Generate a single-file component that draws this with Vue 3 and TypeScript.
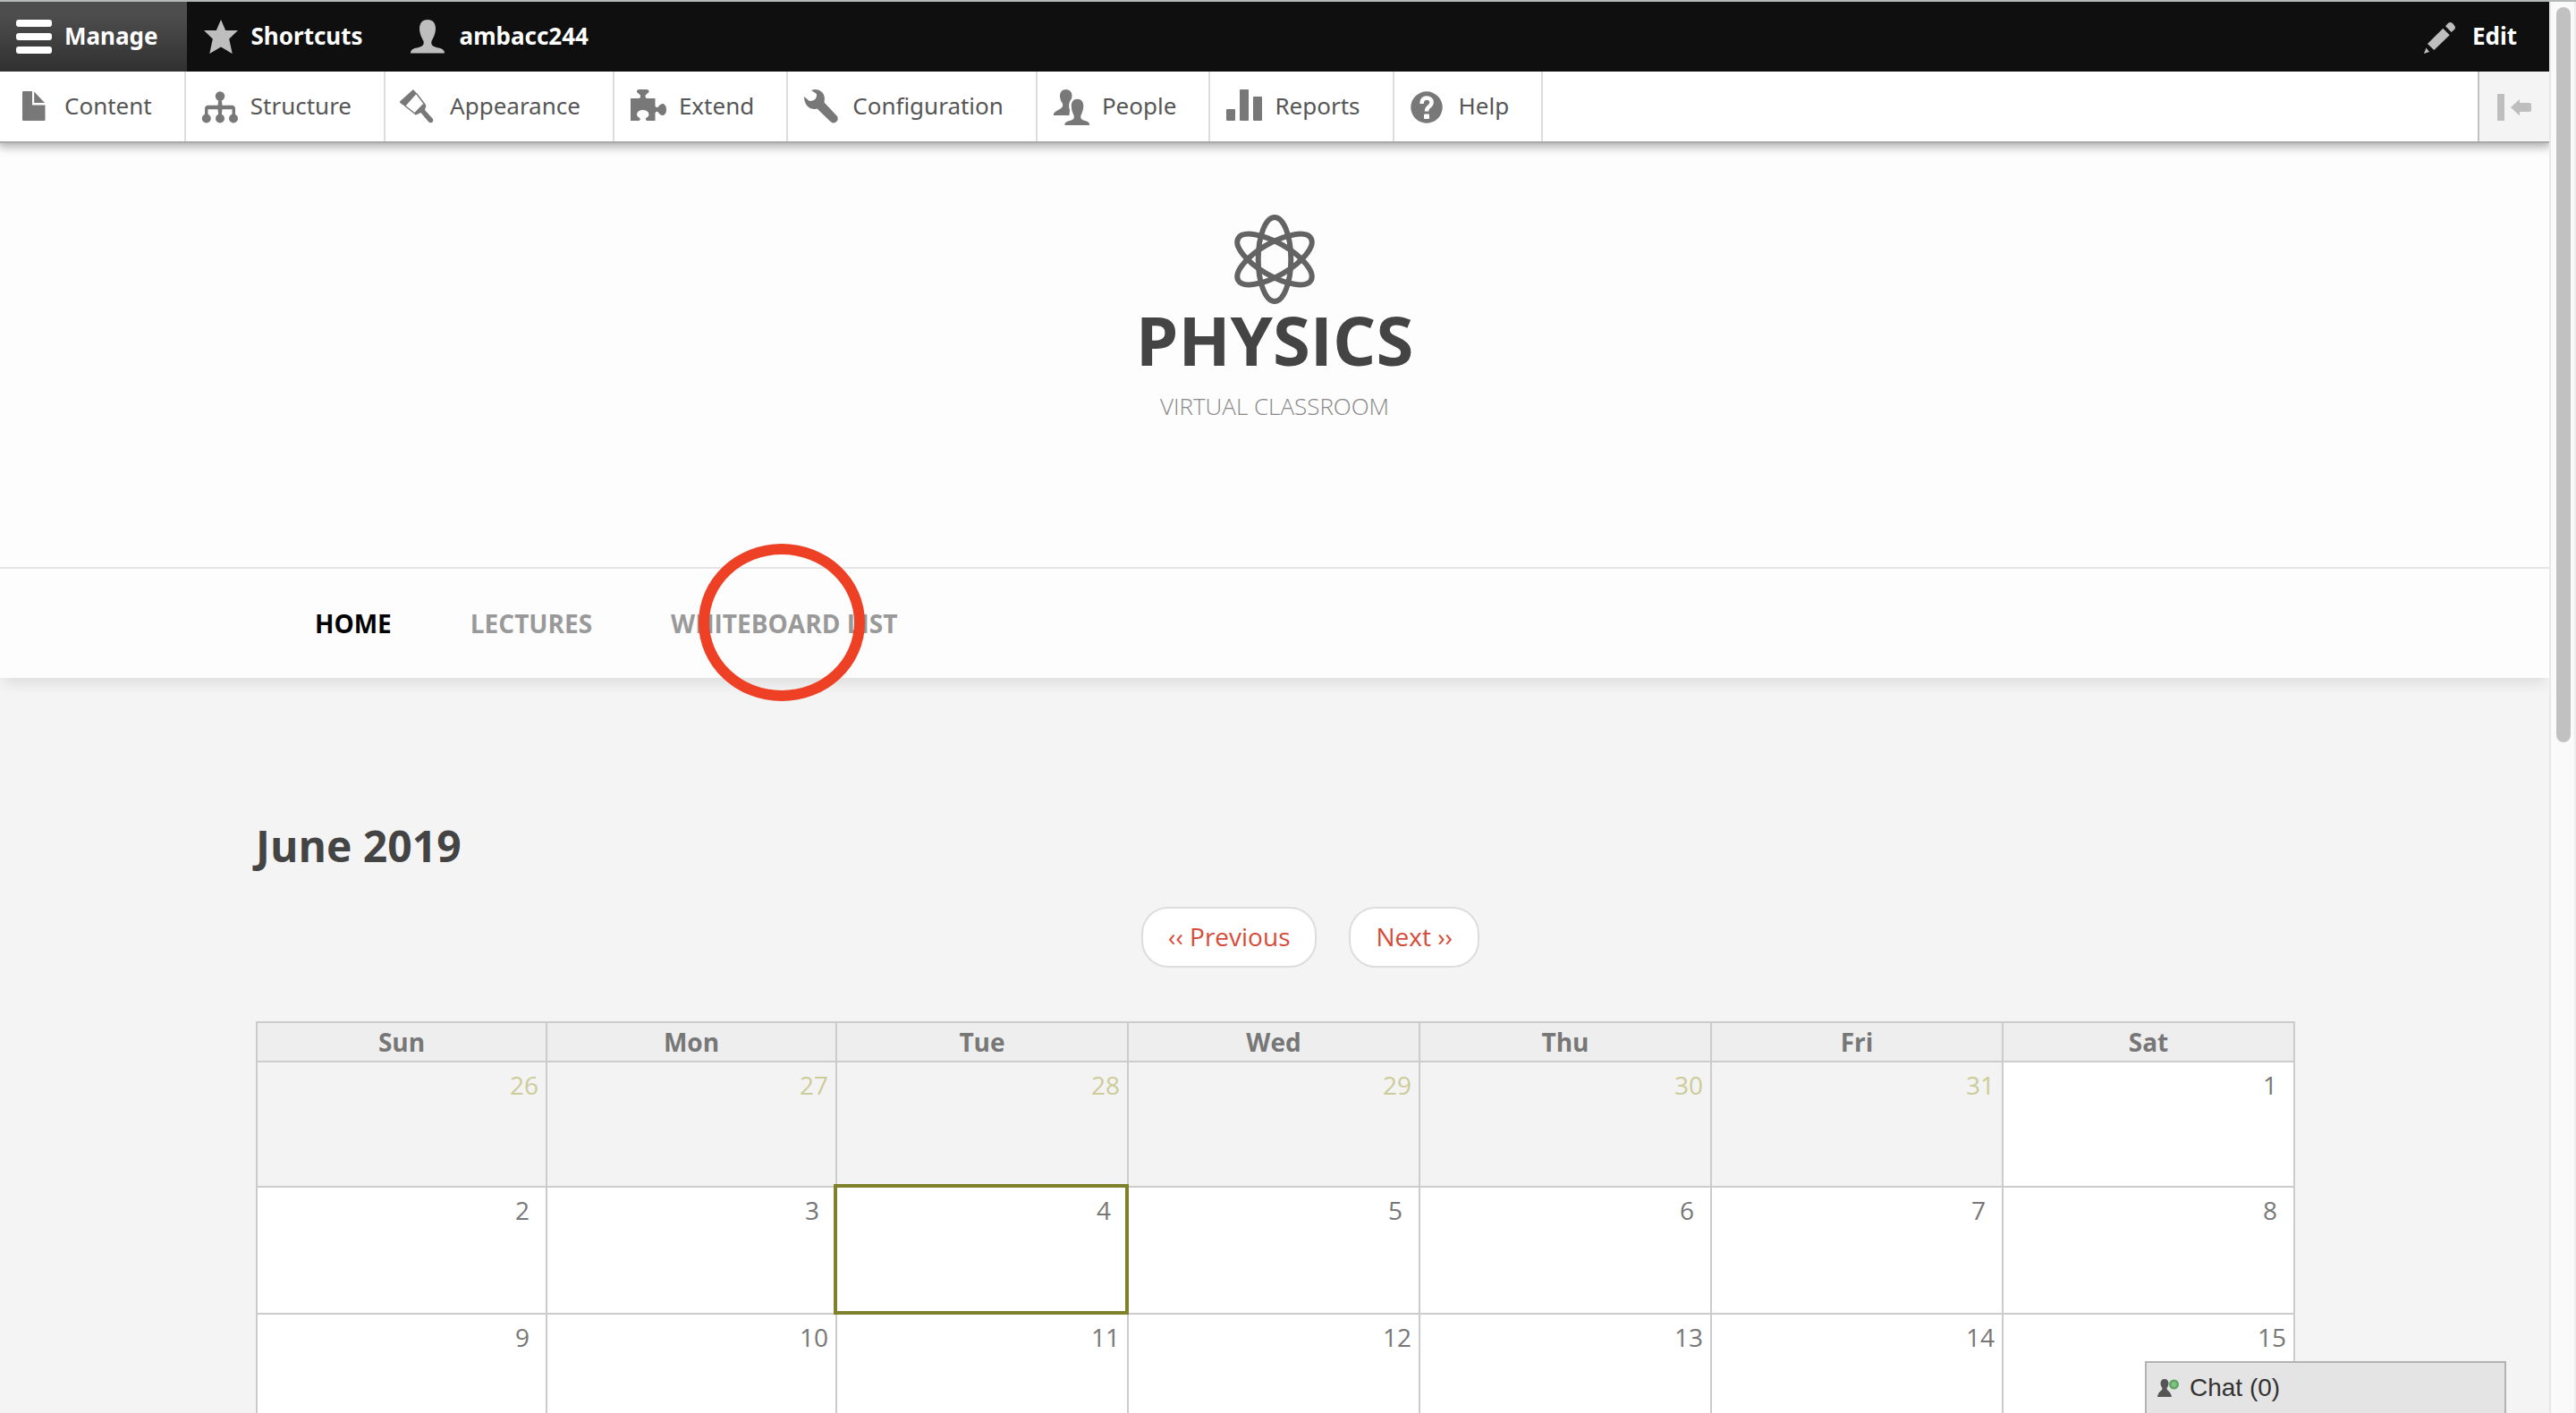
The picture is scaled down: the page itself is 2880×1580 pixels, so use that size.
<script setup lang="ts">
interface TrayItem {
  id: string
  label: string
}

interface Day {
  n: number
  other?: boolean
  today?: boolean
}

const tray: TrayItem[] = [
  { id: 'content', label: 'Content' },
  { id: 'structure', label: 'Structure' },
  { id: 'appearance', label: 'Appearance' },
  { id: 'extend', label: 'Extend' },
  { id: 'configuration', label: 'Configuration' },
  { id: 'people', label: 'People' },
  { id: 'reports', label: 'Reports' },
  { id: 'help', label: 'Help' },
]

const weekdays: string[] = ['Sun', 'Mon', 'Tue', 'Wed', 'Thu', 'Fri', 'Sat']

const range = (from: number, to: number): Day[] =>
  Array.from({ length: to - from + 1 }, (_, i) => ({ n: from + i }))

const weeks: Day[][] = [
  [...range(26, 31).map((d) => ({ ...d, other: true })), { n: 1 }],
  range(2, 8).map((d) => ({ ...d, today: d.n === 4 })),
  range(9, 15),
]
</script>

<template>
  <div class="window">
    <div class="page">
      <header class="toolbar">
        <nav class="bar" aria-label="Administration toolbar">
          <a href="#" class="tab active">
            <svg class="icon" viewBox="0 0 40 40" fill="#fff" aria-hidden="true">
              <rect x="-2" y="1" width="40" height="8" rx="3" />
              <rect x="-2" y="16" width="40" height="8" rx="3" />
              <rect x="-2" y="31" width="40" height="8" rx="3" />
            </svg>
            <span>Manage</span>
          </a>
          <a href="#" class="tab">
            <svg class="icon" viewBox="0 0 40 40" fill="#bebebe" aria-hidden="true">
              <path d="M18 1 23.2 13H37L27.2 22.5 30.7 39 18 31.5 5.3 39 8.8 22.5-1 13H12.8Z" />
            </svg>
            <span>Shortcuts</span>
          </a>
          <a href="#" class="tab">
            <svg class="icon" viewBox="0 0 40 40" fill="#bebebe" aria-hidden="true">
              <path d="M16 1C22 1 25 5 25 11 25 17 22 22 20.500 25 19.500 29 22 31 26 32 31 33 35 34 35 38.500H-3C-3 34 1 33 6 32 10 31 12.500 29 11.500 25 10 22 7 17 7 11 7 5 10 1 16 1Z" />
            </svg>
            <span>ambacc244</span>
          </a>
          <button type="button" class="tab edit">
            <svg class="icon" viewBox="0 0 40 40" fill="#bebebe" aria-hidden="true">
              <path d="M-2 39 .5 32.500 4 37Z" />
              <path d="M2 28 19.300 10.700 26.700 18.300 9.300 35Z" />
              <path d="M22 8.300 25 5Q27 3 30 5L32 7.500Q34 10 32 12L28.700 15Z" />
            </svg>
            <span>Edit</span>
          </button>
        </nav>
        <nav class="tray" aria-label="Administration menu">
          <a v-for="item in tray" :key="item.id" href="#" class="item">
            <svg class="icon" viewBox="0 0 40 40" fill="#787878" aria-hidden="true">
              <template v-if="item.id === 'content'">
                <path d="M6 3H16V18.500H30.500V35Q30.500 36 29.500 36H6Q5 36 5 35V4Q5 3 6 3Z" />
                <path d="M18.200 3.500 30 16H18.200Z" />
              </template>
              <template v-else-if="item.id === 'structure'">
                <circle cx="18" cy="8.500" r="5.200" />
                <path d="M16.300 12H19.700L20.500 18.700H31Q35 18.700 35 22.500V29H31.500V23.300H20.500L19.700 30H16.300L15.500 23.300H4.500V29H1V22.500Q1 18.700 5 18.700H15.500Z" />
                <circle cx="2.800" cy="33.500" r="5" />
                <circle cx="18" cy="33.500" r="5" />
                <circle cx="33" cy="33.500" r="5" />
              </template>
              <template v-else-if="item.id === 'appearance'">
                <path d="M11 1 15 5.500 2 20-3.800 16Q-4.500 15-3.500 14Z" />
                <path d="M14.500 5.500 24 18 13.500 28.500 2 19.500" fill="none" stroke="#787878" stroke-width="1.500" />
                <path d="M22 17 25.500 19 24 24 33 34Q34 37.500 31 38.300 28.500 38.500 27.500 36.500L19.500 27 14 29.500 12 27.500Z" />
              </template>
              <template v-else-if="item.id === 'extend'">
                <path d="M-2 11H7.500Q9.500 10 9 7.500L5 4Q4.500 1 8 1H15.500Q19 1 18.500 4L14.500 7.500Q14 10 16 11H25.500V20Q28.500 22.500 29.500 19.500 32 16.500 34.500 17 38 18.500 38 23.500 38 28.500 34.500 30 32 30.500 29.500 27.500 28.500 24.500 25.500 27V36H16Q14.500 34.500 15 33 18.500 31.500 18.500 28.500 17.500 24 11.800 24 6 24 5 28.500 5 31.500 8.500 33 9.500 34.500 7.500 36H-2Z" />
              </template>
              <template v-else-if="item.id === 'configuration'">
                <path d="M6 2Q13-1 18 4 22 8 20.500 15.500L35 31Q37 35 33.500 37.500 30 39.500 27.500 37L12.500 22.500Q6 24.500 2 20-2 16-2 9L4 14Q8 14 10.500 12 12.500 9 12 6Z" />
              </template>
              <template v-else-if="item.id === 'people'">
                <path d="M11.500 1C16 1 18.500 4 18.500 8L18 11.500C15 15 14.500 19 16 24L15.500 30H-2C-2.500 27 0 25.500 4 23.500 8 21.500 9 19 7.500 16 3.500 10 4 1 11.500 1Z" />
                <path d="M24.500 11.700C29 11.700 31.300 15 31.300 19.500 31.300 24 29.500 27.500 28.500 30 27.500 33.500 29.500 35 33 36 36 36.800 38 37.500 38 41H10.400C10.400 37.500 13 36.800 16 36 20 35 21.500 33.500 20.500 30 19.500 27.500 17.800 24 17.800 19.500 17.800 15 20 11.700 24.500 11.700Z" />
              </template>
              <template v-else-if="item.id === 'reports'">
                <rect x="-2" y="23" width="10" height="13" rx="1" />
                <rect x="13" y="1" width="10" height="35" rx="1" />
                <rect x="28" y="9" width="10" height="27" rx="1" />
              </template>
              <template v-else>
                <circle cx="16" cy="21" r="17.700" />
                <path d="M10.500 17Q10.500 10.500 16.500 10.500 21.500 11 21.500 15.500 21.500 18 19 20 16 22 16 25.500" fill="none" stroke="#fff" stroke-width="4.500" />
                <rect x="13" y="28.500" width="6" height="5.500" rx="1" fill="#fff" />
              </template>
            </svg>
            <span>{{ item.label }}</span>
          </a>
          <button type="button" class="toggle" aria-label="Vertical orientation">
            <svg class="icon" viewBox="0 0 40 40" fill="#bebebe" aria-hidden="true">
              <rect x="1" y="6" width="8" height="30" />
              <path d="M16 21 26 12V16H37Q39 16 39 18V24Q39 26 37 26H26V30.500Z" />
            </svg>
          </button>
        </nav>
      </header>

      <div class="branding">
        <svg class="atom" viewBox="0 0 100 100" fill="none" stroke="#636363" stroke-width="6" aria-hidden="true">
          <ellipse cx="50" cy="50" rx="18.300" ry="47" />
          <ellipse cx="50" cy="50" rx="18.300" ry="47" transform="rotate(60 50 50)" />
          <ellipse cx="50" cy="50" rx="18.300" ry="47" transform="rotate(-60 50 50)" />
        </svg>
        <h1>PHYSICS</h1>
        <p>VIRTUAL CLASSROOM</p>
      </div>

      <nav class="menu" aria-label="Main menu">
        <a href="#" class="current">HOME</a>
        <a href="#">LECTURES</a>
        <a href="#" class="marked">
          WHITEBOARD LIST
          <span class="ring"></span>
        </a>
      </nav>

      <main>
        <h2>June 2019</h2>
        <div class="pager">
          <a href="#">‹‹ Previous</a>
          <a href="#">Next ››</a>
        </div>
        <table>
          <thead>
            <tr>
              <th v-for="d in weekdays" :key="d" scope="col">{{ d }}</th>
            </tr>
          </thead>
          <tbody>
            <tr v-for="(week, i) in weeks" :key="i">
              <td
                v-for="day in week"
                :key="day.n"
                :class="{ other: day.other, today: day.today, single: day.n < 10 }"
              >{{ day.n }}</td>
            </tr>
          </tbody>
        </table>
      </main>

      <button type="button" class="chat">
        <svg viewBox="0 0 24 22" aria-hidden="true">
          <path d="M8 1C11 1 12.500 3 12.500 6 12.500 9 10.500 10 10.500 12 11 14 15 15 16 21H0C1 15 5 14 5.500 12 5.500 10 3.500 9 3.500 6 3.500 3 5 1 8 1Z" fill="#555" />
          <circle cx="18.500" cy="7" r="5.500" fill="#5fa463" />
          <circle cx="18.500" cy="7" r="3" fill="#7fc283" />
        </svg>
        <span>Chat (0)</span>
      </button>
    </div>
    <div class="scroll"><div class="thumb"></div></div>
  </div>
</template>

<style>
body {
  margin: 0;
}
</style>

<style scoped>
* {
  box-sizing: border-box;
}
.window {
  display: flex;
  height: 100vh;
  overflow: hidden;
  border-top: 2px solid #b5b9b9;
  background: #f4f4f4;
  font-family: "Open Sans", "Noto Sans", sans-serif;
  font-size: 28px;
  color: #777;
}
.page {
  position: relative;
  flex: 1;
  min-width: 0;
  overflow: hidden;
}
a {
  color: inherit;
  text-decoration: none;
}
button {
  border: 0;
  margin: 0;
  font: inherit;
  cursor: pointer;
}
.scroll {
  width: 30px;
  padding: 6px 4px 0 6px;
  border-left: 2px solid #e8e8e8;
  border-right: 2px solid #ededed;
  background: #fafafa;
}
.thumb {
  width: 16px;
  height: 52vh;
  border-radius: 8px;
  background: #c1c1c1;
}

.toolbar {
  position: relative;
  font-family: "Noto Sans", "Open Sans", sans-serif;
  font-size: 26px;
  box-shadow: 0 2px 10px 2px rgba(0, 0, 0, 0.33);
}
.bar {
  display: flex;
  height: 78px;
  background: #0f0f0f;
}
.tab,
.item {
  display: flex;
  align-items: center;
  gap: 12px;
  padding: 0 36px 0 20px;
}
.tab span,
.item span {
  padding-bottom: 2px;
}
.tab {
  background: none;
  color: #fff;
  font-weight: 700;
}
.tab.active {
  padding-right: 32px;
  background: linear-gradient(#4d4d4d 20%, #303030);
}
.edit {
  margin-left: auto;
}
.icon {
  width: 40px;
  height: 40px;
  overflow: visible;
  flex: none;
}
.tray {
  display: flex;
  height: 80px;
  border-bottom: 2px solid #aaa;
  background: #fff;
  color: #565656;
}
.item {
  border-right: 2px solid #ddd;
}
.toggle {
  display: flex;
  align-items: center;
  justify-content: center;
  width: 80px;
  margin-left: auto;
  padding: 0;
  border-left: 2px solid #c2c2c2;
  background: #f4f4f4;
}

.branding {
  display: flex;
  flex-direction: column;
  align-items: center;
  height: 474px;
  padding-top: 80px;
  background: #fdfdfd;
}
.atom {
  width: 100px;
  height: 100px;
}
h1 {
  margin: 0;
  font-size: 76px;
  line-height: 80px;
  color: #444;
}
p {
  margin: 16px 0 0;
  font-size: 26px;
  line-height: 36px;
  font-weight: 300;
  color: #888;
}
.menu {
  display: flex;
  align-items: center;
  gap: 88px;
  height: 124px;
  padding: 0 352px;
  border-top: 2px solid #e5e5e5;
  background: #fdfdfd;
  box-shadow: 0 12px 12px -4px rgba(0, 0, 0, 0.08);
  font-weight: 700;
  color: #999;
}
.current {
  color: #000;
}
.marked {
  position: relative;
}
.ring {
  position: absolute;
  top: -70px;
  left: 31px;
  width: 186px;
  height: 176px;
  border: 12px solid #ed4025;
  border-radius: 50%;
}

main {
  padding: 156px 284px 0 286px;
}
h2 {
  margin: 0;
  font-size: 48px;
  line-height: 64px;
  color: #444;
}
.pager {
  display: flex;
  justify-content: center;
  gap: 36px;
  margin: 36px 0 60px;
  padding-left: 78px;
}
.pager a {
  padding: 0 28px 2px;
  border: 2px solid #ddd;
  border-radius: 30px;
  background: #fff;
  line-height: 62px;
  color: #d64c3a;
}
table {
  width: 100%;
  table-layout: fixed;
  border-collapse: separate;
  border-spacing: 0;
  border-top: 2px solid #ccc;
  border-left: 2px solid #ccc;
}
th {
  height: 44px;
  padding: 0;
  border-right: 2px solid #ccc;
  border-bottom: 2px solid #ccc;
  background: #eee;
  line-height: 42px;
}
th:nth-child(-n + 2) {
  width: 324px;
}
td {
  position: relative;
  height: 142px;
  padding: 5px 8px 0 0;
  border-right: 2px solid #ccc;
  border-bottom: 2px solid #ccc;
  background: #fff;
  line-height: 40px;
  text-align: right;
  vertical-align: top;
}
tbody tr:first-child td {
  height: 140px;
}
td.single {
  padding-right: 18px;
}
td.other {
  background: #f3f3f3;
  color: #cc9;
}
td.today::after {
  content: "";
  position: absolute;
  inset: -4px -2px -2px -4px;
  border: 4px solid #7f802b;
}
.chat {
  position: absolute;
  right: 48px;
  bottom: 0;
  display: flex;
  align-items: center;
  gap: 12px;
  width: 404px;
  height: 58px;
  padding: 0 12px;
  border: 2px solid #b3b3b3;
  border-bottom: 0;
  background: #e4e4e4;
  font-family: "Liberation Sans", Arial, sans-serif;
  color: #333;
}
.chat svg {
  width: 24px;
  height: 22px;
}
</style>
